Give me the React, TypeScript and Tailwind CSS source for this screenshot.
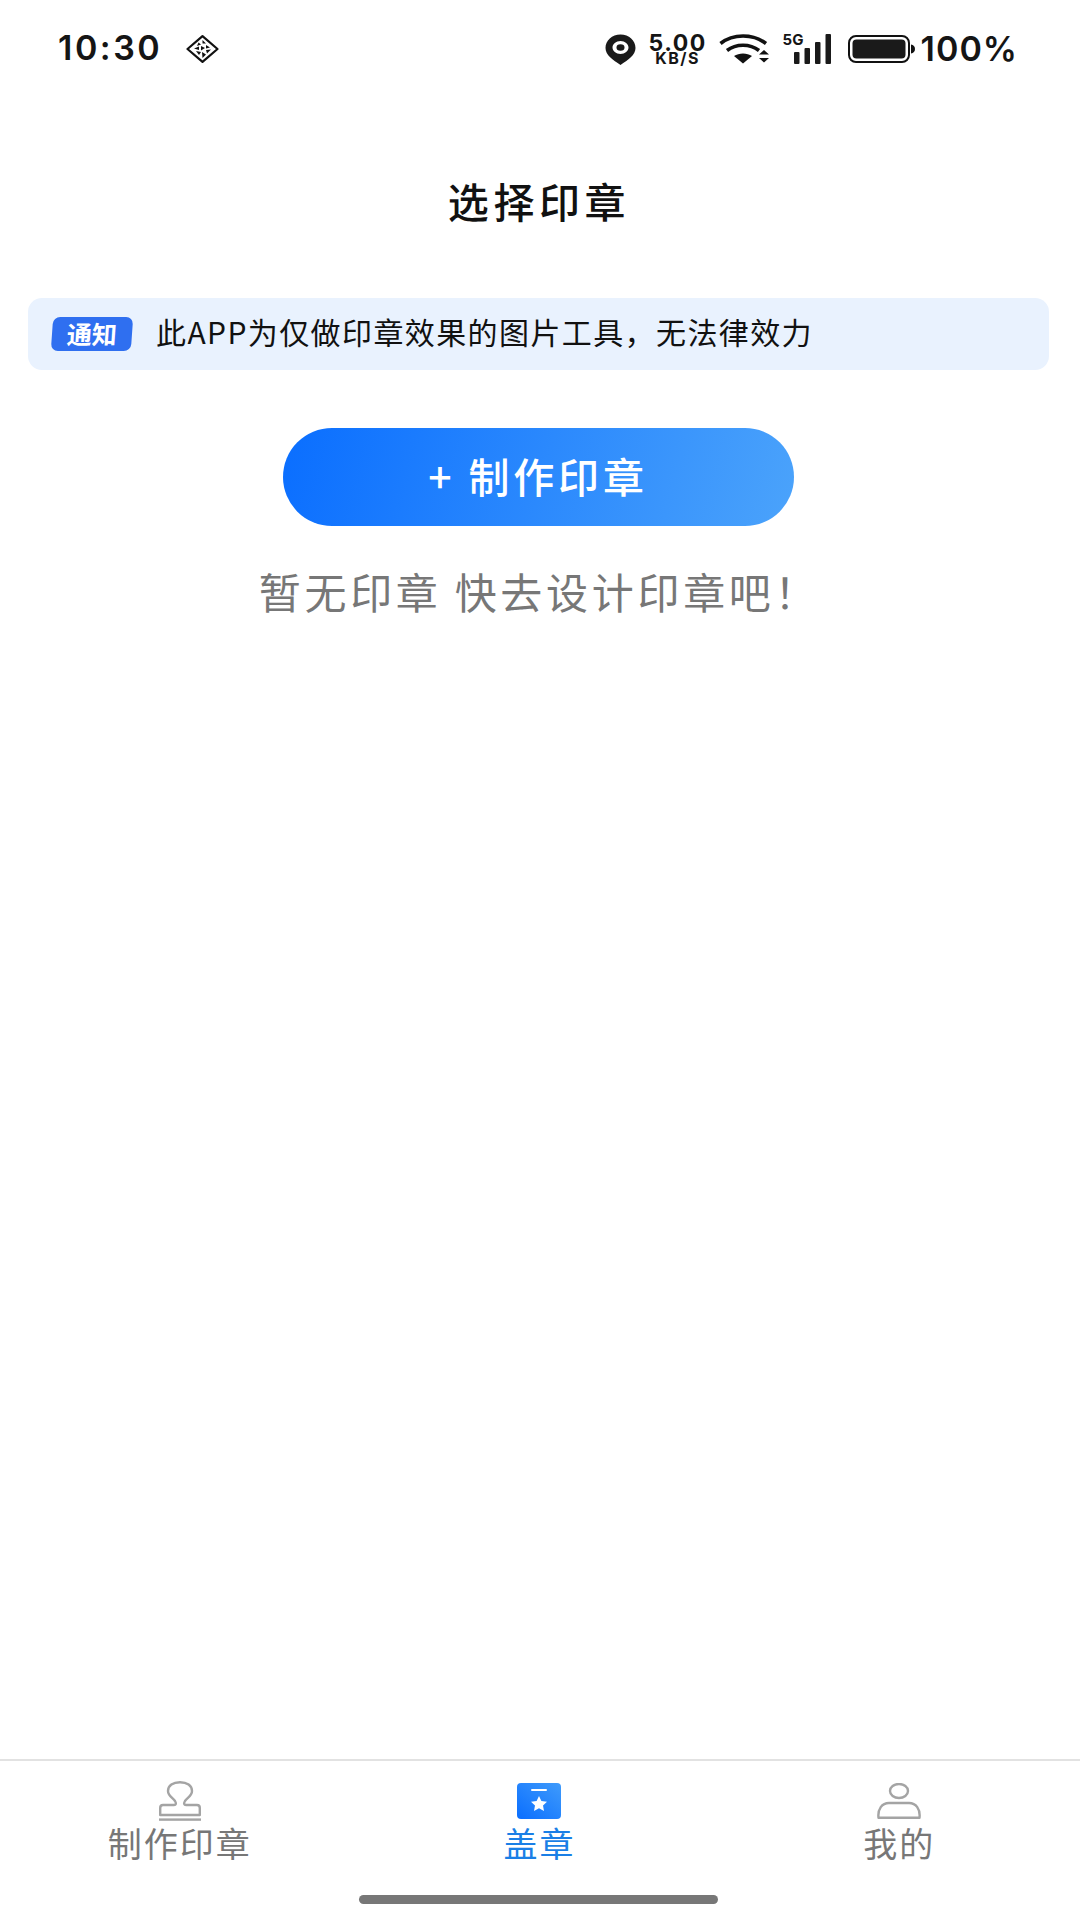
import React from "react";

const cjk = { fontFamily: '"Noto Sans CJK SC", "Noto Sans", sans-serif' };
const inter = { fontFamily: "Inter, sans-serif" };

function DiamondIcon() {
  return (
    <svg width="33" height="28" viewBox="0 0 33 28" className="block">
      <path d="M16.5 1.2 L31.5 14 L16.5 26.8 L1.5 14 Z" fill="none" stroke="#111" strokeWidth="2.2" strokeLinejoin="round" />
      <path d="M16.5 5 L20 8.5 L16.5 8.5 Z M12.5 7.5 L15 9.5 L11 11 Z M20 10 L24 12.5 L20 13.5 Z M8 13.5 L13 11.5 L13 15 Z M15 11 L19 13 L15 15.5 Z M20 15 L25 14.5 L21 18.5 Z M10 16 L15 17 L13 20 Z M16 17 L20 19.5 L16.5 23 Z" fill="#111" />
    </svg>
  );
}

function PinIcon() {
  return (
    <svg width="31" height="31" viewBox="0 0 31 31" className="block">
      <path fillRule="evenodd" d="M15.5 0.5 C7 0.5 0.5 6.5 0.5 14 C0.5 21 8 26 15.5 31 C23 26 30.5 21 30.5 14 C30.5 6.5 24 0.5 15.5 0.5 Z M15.5 7 C20 7 23.5 10 23.5 13.5 C23.5 17 20 20 15.5 20 C11 20 7.5 17 7.5 13.5 C7.5 10 11 7 15.5 7 Z" fill="#1a1a1a" />
      <ellipse cx="15.5" cy="13.5" rx="4" ry="3.2" fill="#1a1a1a" />
    </svg>
  );
}

function WifiIcon() {
  return (
    <svg width="50" height="30" viewBox="0 0 50 30" className="block">
      <path d="M1.5 9.5 C14 -0.5 34 -0.5 47 9.5" fill="none" stroke="#111" strokeWidth="3.6" />
      <path d="M8 16.5 C17 9.5 31 9.5 40 16.5" fill="none" stroke="#111" strokeWidth="3.6" />
      <path d="M15 22 C20 18.5 28 18.5 33 22 L24 29.5 Z" fill="#111" />
      <path d="M40 20.5 L45 16 L50 20.5 Z M40 24 L50 24 L45 28.5 Z" fill="#111" />
    </svg>
  );
}

function SignalBars() {
  return (
    <svg width="38" height="30" viewBox="0 0 38 30" className="block">
      <rect x="0" y="18" width="5.5" height="12" rx="1" fill="#1a1a1a" />
      <rect x="10.5" y="14" width="5.5" height="16" rx="1" fill="#1a1a1a" />
      <rect x="21" y="8" width="5.5" height="22" rx="1" fill="#1a1a1a" />
      <rect x="31.5" y="0" width="5.5" height="30" rx="1" fill="#1a1a1a" />
    </svg>
  );
}

function BatteryIcon() {
  return (
    <svg width="67" height="28" viewBox="0 0 67 28" className="block">
      <rect x="1" y="1" width="60" height="26" rx="7" fill="none" stroke="#111" strokeWidth="2" />
      <rect x="4.5" y="4.5" width="53" height="19" rx="4" fill="#1a1a1a" />
      <path d="M63 9.5 C65.5 10 67 11.5 67 14 C67 16.5 65.5 18 63 18.5 Z" fill="#111" />
    </svg>
  );
}

function StampIcon() {
  return (
    <svg width="42" height="40" viewBox="0 0 42 40" className="block">
      <path d="M1.2 34 L1.2 27 C1.2 25 2 24 4 24 L15 24 C17 24 17.5 22.5 16 20 C14 17 9 15 9 10 C9 4.5 14 1.2 21 1.2 C28 1.2 33 4.5 33 10 C33 15 28 17 26 20 C24.5 22.5 25 24 27 24 L38 24 C40 24 40.8 25 40.8 27 L40.8 34 Z" fill="none" stroke="#a4a4a4" strokeWidth="2.4" strokeLinejoin="round" />
      <rect x="0" y="37.4" width="42" height="2.4" fill="#a4a4a4" />
    </svg>
  );
}

function BlueStampIcon() {
  return (
    <svg width="44" height="36" viewBox="0 0 44 36" className="block">
      <defs>
        <linearGradient id="bs" x1="0" y1="1" x2="1" y2="0">
          <stop offset="0" stopColor="#0a6eff" />
          <stop offset="1" stopColor="#3f9bfb" />
        </linearGradient>
      </defs>
      <rect x="0" y="0" width="44" height="36" rx="4" fill="url(#bs)" />
      <rect x="14" y="6" width="16" height="2" rx="1" fill="#fff" />
      <path d="M22 13 L24.4 18 L30 18.7 L26 22.5 L27 28 L22 25.3 L17 28 L18 22.5 L14 18.7 L19.6 18 Z" fill="#fff" />
    </svg>
  );
}

function UserIcon() {
  return (
    <svg width="44" height="36" viewBox="0 0 44 36" className="block">
      <ellipse cx="22" cy="8" rx="9" ry="7" fill="none" stroke="#a4a4a4" strokeWidth="2.4" />
      <path d="M1.5 34.8 L42.5 34.8 C43.5 26 39 20 32 20 L12 20 C5 20 0.5 26 1.5 34.8 Z" fill="none" stroke="#a4a4a4" strokeWidth="2.4" strokeLinejoin="round" />
    </svg>
  );
}

function Tab({ icon, label, active }: { icon: React.ReactNode; label: string; active?: boolean }) {
  return (
    <div className="flex flex-col items-center">
      <div className="flex h-[40px] items-center justify-center">{icon}</div>
      <span className={`text-[34px] leading-[44px] tracking-[2px] ${active ? "text-[#1a7fe6]" : "text-[#777777]"}`} style={cjk}>
        {label}
      </span>
    </div>
  );
}

export default function App() {
  return (
    <div className="flex h-[1920px] w-[1080px] flex-col overflow-hidden bg-white" style={cjk}>
      <div className="flex h-[98px] items-center pl-[58px] pr-[62px] text-[#151515]">
        <span className="pb-[3px] text-[34px] font-semibold tracking-[2.5px]" style={inter}>10:30</span>
        <div className="ml-[24px] pb-[1px]"><DiamondIcon /></div>
        <div className="ml-auto flex items-center">
          <PinIcon />
          <div className="ml-[11px] flex w-[62px] flex-col items-center font-bold leading-none" style={inter}>
            <span className="text-[23px] leading-[18px] tracking-[1.5px]">5.00</span>
            <span className="text-[16px] leading-[13px] tracking-[1.5px]">KB/S</span>
          </div>
          <div className="ml-[10px]"><WifiIcon /></div>
          <div className="relative ml-[25px] h-[30px] w-[37px]">
            <SignalBars />
            <span className="absolute left-[-11px] top-[-2px] text-[15px] font-bold leading-[15px]" style={inter}>5G</span>
          </div>
          <div className="ml-[17px]"><BatteryIcon /></div>
          <span className="ml-[6px] pb-[2px] text-[34px] font-semibold tracking-[1px]" style={inter}>100%</span>
        </div>
      </div>

      <div className="mr-[2px] mt-[72px] text-center text-[41px] font-medium leading-[60px] tracking-[4.6px] text-[#111111]">选择印章</div>

      <div className="ml-[28px] mr-[31px] mt-[68px] flex h-[72px] items-center rounded-[14px] bg-[#e9f2fe] pl-[24px]">
        <span className="flex h-[34px] w-[80px] items-center justify-center rounded-[7px] bg-[#2f6ff0] text-[25px] font-bold text-white [transform:skewX(-4deg)]">通知</span>
        <span className="relative top-[-3px] ml-[24px] text-[30px] tracking-[1.4px] text-[#111111]">此APP为仅做印章效果的图片工具，无法律效力</span>
      </div>

      <div className="mr-[4px] mt-[58px] flex h-[98px] w-[511px] items-center justify-center self-center rounded-full bg-linear-[105deg] from-[#0a6eff] to-[#4ba3fb] pb-[2px] text-[41px] font-medium tracking-[3.8px] text-white">
        + 制作印章
      </div>

      <div className="mr-[1px] mt-[35px] text-center text-[42px] leading-[60px] tracking-[3.7px] text-[#777777]">暂无印章 快去设计印章吧！</div>

      <div className="mt-auto h-[161px] border-t-2 border-[#e2e2e2]">
        <div className="grid grid-cols-3 pr-[1px] pt-[20px]">
          <Tab icon={<StampIcon />} label="制作印章" />
          <Tab icon={<BlueStampIcon />} label="盖章" active />
          <Tab icon={<UserIcon />} label="我的" />
        </div>
        <div className="ml-[359px] mt-[30px] h-[9px] w-[359px] rounded-full bg-[#777777]" />
      </div>
    </div>
  );
}
